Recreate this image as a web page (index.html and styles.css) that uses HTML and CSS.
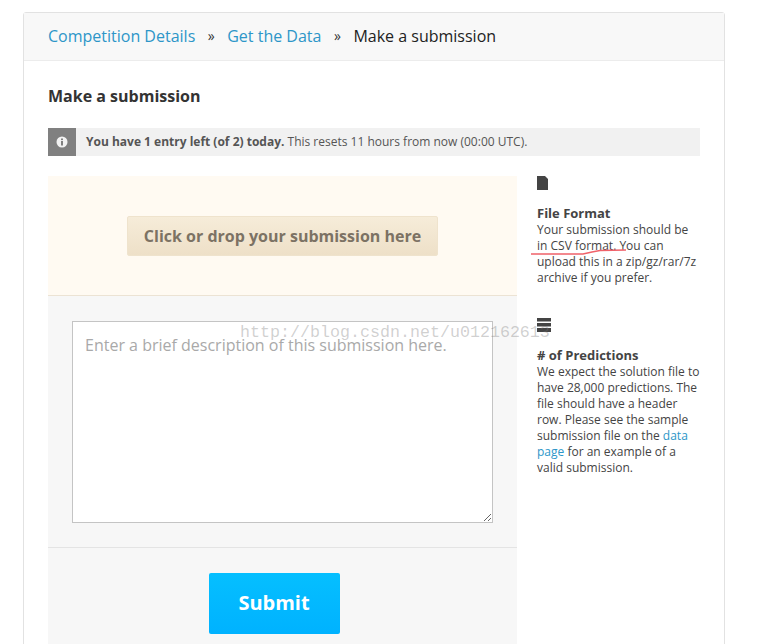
FILE: index.html
```html
<!DOCTYPE html>
<html lang="en">
    <head>
        <meta charset="utf-8">
        <title>Make a submission</title>
        <link rel="stylesheet" href="styles.css">
    </head>
    <body>
        <div class="card">
            <div class="crumbs">
                <a href="#">Competition Details</a>
                <span class="sep">»</span>
                <a href="#">Get the Data</a>
                <span class="sep">»</span>
                <span class="current">Make a submission</span>
            </div>
            <div class="cardBody">
                <h1>Make a submission</h1>
                <div class="notice">
                    <div class="noticeIcon">
                        <svg width="12" height="12" viewBox="0 0 12 12">
                            <circle cx="6" cy="6" r="5.5" fill="#f2f2f2"/>
                            <rect x="5" y="5" width="2" height="4.5" fill="#808080"/>
                            <rect x="5" y="2.5" width="2" height="1.6" fill="#808080"/>
                        </svg>
                    </div>
                    <p><b>You have 1 entry left (of 2) today.</b> This resets 11 hours from now (00:00 UTC).</p>
                </div>
                <div class="columns">
                    <form class="submitForm">
                        <div class="dropZone">
                            <button type="button" class="dropButton">Click or drop your submission here</button>
                        </div>
                        <div class="describe">
                            <textarea placeholder="Enter a brief description of this submission here."></textarea>
                        </div>
                        <div class="actions">
                            <button type="button" class="submitButton">Submit</button>
                        </div>
                    </form>
                    <div class="sidebar">
                        <div class="tip">
                            <svg class="tipIcon" width="11" height="14" viewBox="0 0 11 14">
                                <path d="M0 0H8L11 3V14H0Z" fill="#444"/>
                            </svg>
                            <h2>File Format</h2>
                            <p>Your submission should be in CSV format. You can upload this in a zip/gz/rar/7z archive if you prefer.</p>
                        </div>
                        <div class="tip">
                            <svg class="tipIcon" width="14" height="14" viewBox="0 0 14 14">
                                <path d="M0 0H14V3.5H0ZM0 5H14V8.5H0ZM0 10H14V14H0Z" fill="#444"/>
                            </svg>
                            <h2># of Predictions</h2>
                            <p>We expect the solution file to have 28,000 predictions. The file should have a header row. Please see the sample submission file on the <a href="#">data page</a> for an example of a valid submission.</p>
                        </div>
                    </div>
                </div>
            </div>
        </div>
        <div class="watermark">http://blog.csdn.net/u012162613</div>
        <svg class="scribble" width="100" height="12" viewBox="0 0 100 12">
            <path d="M1 9H53L62 7L70 5.5L96 5" fill="none" stroke="#f0626a" stroke-width="1.4"/>
        </svg>
    </body>
</html>
```

FILE: styles.css
```css
html, body {
    height: 644px;
    overflow: hidden;
}
body {
    margin: 0;
    background: white;
    color: #444;
    font-family: "Open Sans", sans-serif;
    position: relative;
}
a {
    color: #2d96c8;
    text-decoration: none;
}
.card {
    width: 700px;
    margin: 12px 0 0 23px;
    border: 1px solid #e2e2e2;
    border-radius: 3px;
}
.crumbs {
    display: flex;
    align-items: center;
    box-sizing: content-box;
    height: 45px;
    padding: 0 0 2px 24px;
    background: #f8f8f8;
    border-bottom: 1px solid #ececec;
    font-size: 16px;
}
.sep {
    margin: 0 12.5px;
    font-size: 14px;
    color: #333;
}
.current {
    color: #222;
}
.cardBody {
    padding: 0 24px;
}
h1 {
    margin: 24px 0 21px;
    font-size: 16px;
    line-height: 22px;
    font-weight: 700;
    color: #333;
}
.notice {
    display: flex;
    align-items: center;
    width: 652px;
    height: 28px;
    background: #f1f1f1;
    font-size: 12px;
    color: #555;
}
.notice p {
    margin: 0 0 2px 10px;
}
.notice b {
    color: #555;
}
.noticeIcon {
    display: flex;
    align-items: center;
    justify-content: center;
    width: 28px;
    height: 28px;
    background: #808080;
}
.columns {
    display: flex;
    margin-top: 20px;
}
.submitForm {
    width: 469px;
    flex-shrink: 0;
    background: #f7f7f7;
}
.dropZone {
    display: flex;
    align-items: center;
    justify-content: center;
    height: 118px;
    padding-top: 1px;
    background: #fffaf2;
    border-bottom: 1px solid #ece3d4;
}
.dropButton {
    width: 311px;
    height: 40px;
    padding: 0;
    border: 1px solid #efe3cd;
    border-radius: 2px;
    background: linear-gradient(#f6ecd9, #eee0c8);
    color: #7c7264;
    font-family: "Open Sans", sans-serif;
    font-size: 16px;
    font-weight: 700;
}
.describe {
    padding: 25px 24px 24px;
    border-bottom: 1px solid #e4e4e4;
}
.describe textarea {
    display: block;
    box-sizing: border-box;
    width: 421px;
    height: 202px;
    padding: 12px;
    border: 1px solid #c4c4c4;
    background: white;
    font-family: "Open Sans", sans-serif;
    font-size: 16px;
    line-height: 22px;
}
.describe textarea::placeholder {
    color: #a9a9a9;
}
.actions {
    display: flex;
    justify-content: center;
    padding: 25px 17px 20px 0;
}
.submitButton {
    width: 131px;
    height: 61px;
    padding: 0 0 2px;
    border: 0;
    border-radius: 2px;
    background: linear-gradient(#05bfff, #00b2ff);
    color: white;
    font-family: "Open Sans", sans-serif;
    font-size: 20px;
    font-weight: 700;
}
.sidebar {
    margin-left: 20px;
    width: 164px;
    font-size: 12px;
    line-height: 16px;
}
.tip {
    margin-bottom: 32px;
}
.tipIcon {
    display: block;
    margin-bottom: 15px;
}
h2 {
    margin: 0;
    font-size: 13px;
    line-height: 17px;
    font-weight: 700;
    color: #444;
}
.tip p {
    margin: 0;
}
.watermark {
    position: absolute;
    left: 240px;
    top: 323px;
    font-family: "Liberation Mono", monospace;
    font-size: 16.67px;
    color: rgba(120, 120, 120, 0.35);
    white-space: nowrap;
    pointer-events: none;
}
.scribble {
    position: absolute;
    left: 530px;
    top: 245px;
}
```
